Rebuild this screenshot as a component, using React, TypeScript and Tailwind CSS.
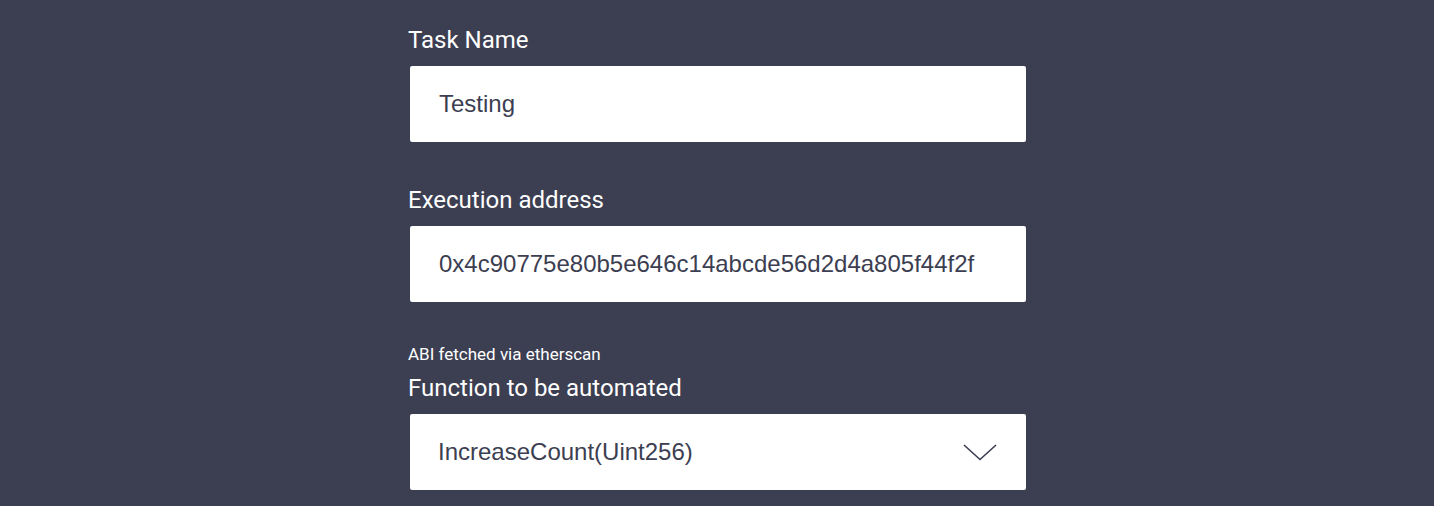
import type { ReactNode } from "react";

function Label({ children }: { children: ReactNode }) {
  return (
    <div className="h-[28px] text-[24px] leading-[28px] text-white font-['Roboto',sans-serif]">
      {children}
    </div>
  );
}

function Field({ value }: { value: string }) {
  return (
    <div className="ml-[2px] mt-[12px] flex h-[76px] w-[616px] items-center rounded-[2px] bg-white pl-[29px] text-[24px] text-[#3c3e51] font-['Liberation_Sans',Arial,sans-serif]">
      {value}
    </div>
  );
}

export default function App() {
  return (
    <div className="flex min-h-[506px] w-full justify-center bg-[#3c3e51]">
      <div className="w-[618px] pt-[26px]">
        <Label>Task Name</Label>
        <Field value="Testing" />

        <div className="mt-[44px]">
          <Label>Execution address</Label>
        </div>
        <Field value="0x4c90775e80b5e646c14abcde56d2d4a805f44f2f" />

        <div className="mt-[42px] h-[20px] text-[17px] leading-[20px] text-white font-['Roboto',sans-serif]">
          ABI fetched via etherscan
        </div>
        <div className="mt-[10px]">
          <Label>Function to be automated</Label>
        </div>
        <div className="ml-[2px] mt-[12px] flex h-[76px] w-[616px] items-center justify-between rounded-[2px] bg-white pl-[28px] pr-[29px] text-[24px] text-[#3c3e51] font-['Liberation_Sans',Arial,sans-serif]">
          <span>IncreaseCount(Uint256)</span>
          <svg width="34" height="17" viewBox="0 0 34 17" fill="none">
            <path d="M1 1L17 15.5L33 1" stroke="#3c3e51" strokeWidth="1.6" />
          </svg>
        </div>
      </div>
    </div>
  );
}
